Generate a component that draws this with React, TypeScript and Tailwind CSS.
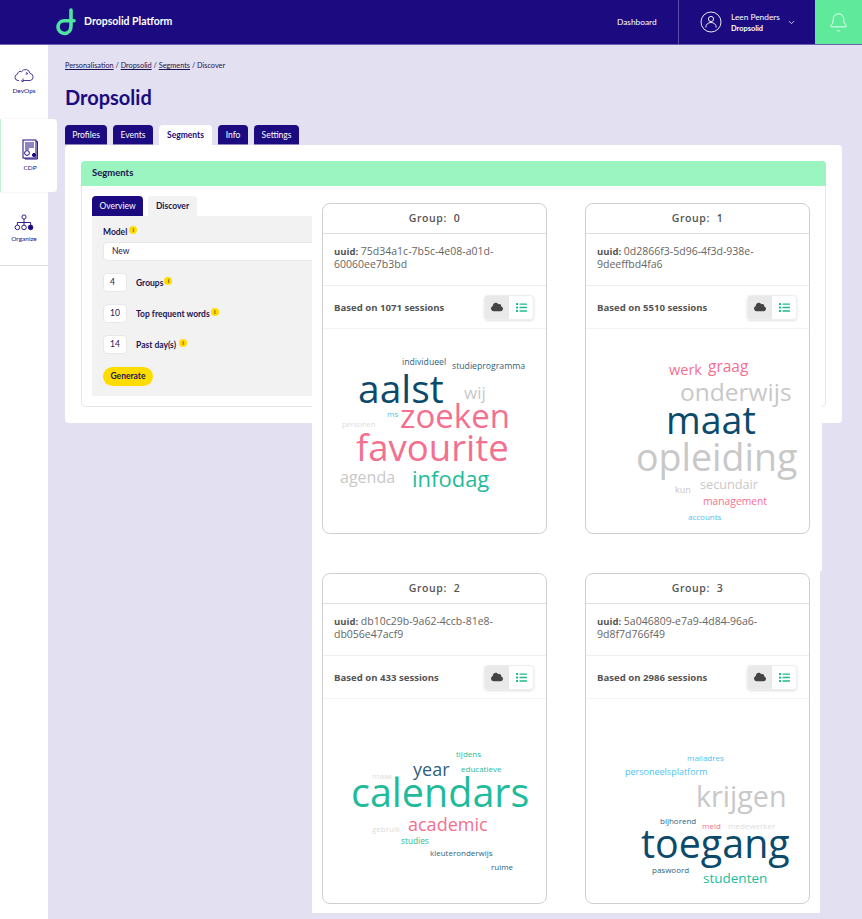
import { Bell, ChevronDown } from 'lucide-react';
import { FaCloud, FaList } from 'react-icons/fa';

const DARK = '#0b4a6b';
const PINK = '#f4708f';
const GRAY = '#c8c8c8';
const LIGHT = '#dcdcdc';
const TEAL = '#1fbb9c';
const BLUE = '#4cc3f1';
const SLATE = '#2f5f80';

type Word = { text: string; x: number; y: number; size: number; color: string };

// x = left edge, y = baseline, both measured from the top left of the cloud area
const groups: { id: number; uuid: string[]; sessions: number; words: Word[] }[] = [
  {
    id: 0,
    uuid: ['75d34a1c-7b5c-4e08-a01d-', '60060ee7b3bd'],
    sessions: 1071,
    words: [
      { text: 'individueel', x: 79, y: 37, size: 8.7, color: SLATE },
      { text: 'studieprogramma', x: 129, y: 41, size: 8.7, color: SLATE },
      { text: 'aalst', x: 35, y: 74, size: 39, color: DARK },
      { text: 'wij', x: 141, y: 70, size: 17, color: GRAY },
      { text: 'ms', x: 64, y: 88, size: 8, color: BLUE },
      { text: 'personen', x: 19, y: 99, size: 7.5, color: LIGHT },
      { text: 'zoeken', x: 77, y: 99, size: 33, color: PINK },
      { text: 'favourite', x: 33, y: 132, size: 36.5, color: PINK },
      { text: 'agenda', x: 17, y: 154, size: 16, color: GRAY },
      { text: 'infodag', x: 89, y: 158, size: 22, color: TEAL },
    ],
  },
  {
    id: 1,
    uuid: ['0d2866f3-5d96-4f3d-938e-', '9deeffbd4fa6'],
    sessions: 5510,
    words: [
      { text: 'werk', x: 83, y: 47, size: 14.5, color: PINK },
      { text: 'graag', x: 122, y: 44, size: 15.5, color: PINK },
      { text: 'onderwijs', x: 94, y: 73, size: 24.5, color: GRAY },
      { text: 'maat', x: 80, y: 105, size: 37.5, color: DARK },
      { text: 'opleiding', x: 50, y: 142, size: 37.5, color: GRAY },
      { text: 'secundair', x: 114, y: 160, size: 12.7, color: GRAY },
      { text: 'kun', x: 89, y: 164, size: 9, color: GRAY },
      { text: 'management', x: 117, y: 176, size: 10.3, color: PINK },
      { text: 'accounts', x: 102, y: 191, size: 8, color: BLUE },
    ],
  },
  {
    id: 2,
    uuid: ['db10c29b-9a62-4ccb-81e8-', 'db056e47acf9'],
    sessions: 433,
    words: [
      { text: 'tijdens', x: 133, y: 58, size: 8, color: TEAL },
      { text: 'educatieve', x: 138, y: 73, size: 8, color: TEAL },
      { text: 'year', x: 90, y: 77, size: 18, color: SLATE },
      { text: 'maak', x: 49, y: 80, size: 8, color: LIGHT },
      { text: 'calendars', x: 28, y: 109, size: 39.5, color: TEAL },
      { text: 'academic', x: 85, y: 132, size: 18, color: PINK },
      { text: 'gebruik', x: 49, y: 133, size: 8, color: LIGHT },
      { text: 'studies', x: 78, y: 145, size: 8.3, color: TEAL },
      { text: 'kleuteronderwijs', x: 107, y: 157, size: 8, color: SLATE },
      { text: 'ruime', x: 168, y: 171, size: 8, color: SLATE },
    ],
  },
  {
    id: 3,
    uuid: ['5a046809-e7a9-4d84-96a6-', '9d8f7d766f49'],
    sessions: 2986,
    words: [
      { text: 'mailadres', x: 101, y: 62, size: 8, color: BLUE },
      { text: 'personeelsplatform', x: 39, y: 76, size: 9, color: BLUE },
      { text: 'krijgen', x: 110, y: 108, size: 28.7, color: GRAY },
      { text: 'bijhorend', x: 74, y: 125, size: 8, color: SLATE },
      { text: 'meld', x: 116, y: 130, size: 8, color: PINK },
      { text: 'medewerker', x: 142, y: 130, size: 8, color: LIGHT },
      { text: 'toegang', x: 55, y: 160, size: 39.4, color: DARK },
      { text: 'paswoord', x: 66, y: 174, size: 8, color: SLATE },
      { text: 'studenten', x: 117, y: 185, size: 13.5, color: TEAL },
    ],
  },
];

function Info() {
  return (
    <span className="inline-flex h-2 w-2 items-center justify-center rounded-full bg-[#ffdc00] text-[6px] leading-none font-bold text-[#5b4b00]">
      i
    </span>
  );
}

function DevOpsIcon() {
  return (
    <svg width="20" height="16" viewBox="0 0 20 16" fill="none" stroke="#1c0b80" strokeWidth="0.8">
      <path d="M5 13.5H4a3.2 3.2 0 0 1-.6-6.3 3.4 3.4 0 0 1 4.2-2.6A4.6 4.6 0 0 1 16 6.4a3.6 3.6 0 0 1 .2 7.1H9" />
      <path d="M9 11.5v3.5l-2-1.6M12.5 5l1 2-2 .2" />
    </svg>
  );
}

function CdpIcon() {
  return (
    <svg width="16" height="21" viewBox="0 0 16 21" fill="none" stroke="#1c0b80" strokeWidth="1">
      <path d="M14 2.5h1.4v17.5H3v-1" />
      <rect x="1" y="1" width="13" height="18" fill="#fff" />
      <path d="M3 4h9M3 6h9M3 8h9M3 10h4" />
      <circle cx="5" cy="14" r="2.4" />
      <circle cx="12" cy="16" r="1.6" fill="#1c0b80" />
    </svg>
  );
}

function OrganizeIcon() {
  return (
    <svg width="20" height="17" viewBox="0 0 20 17" fill="none" stroke="#1c0b80" strokeWidth="0.9">
      <circle cx="10" cy="3" r="2.1" />
      <path d="M10 5v3.5M3.4 11V8.5h13.2V11M10 8.5V11" />
      <circle cx="3.4" cy="13.4" r="2.3" />
      <circle cx="10" cy="13.4" r="2.3" />
      <circle cx="16.6" cy="13.4" r="2.3" fill="#1c0b80" />
    </svg>
  );
}

function Logo() {
  return (
    <svg width="20" height="28" viewBox="0 0 20 28" fill="none" stroke="#4fe3a0" strokeWidth="3.6" strokeLinecap="round">
      <path d="M15 2v16c0 4.5-2.6 7.5-6.6 7.5A6.6 6.6 0 0 1 2 19c0-3.700 2.900-6.300 6.500-6.300H18" />
    </svg>
  );
}

function UserIcon() {
  return (
    <svg width="22" height="22" viewBox="0 0 22 22" fill="none" stroke="#fff" strokeWidth="0.9">
      <circle cx="11" cy="11" r="10" />
      <circle cx="11" cy="8" r="2.600" />
      <path d="M5.800 16.500c0-3 2-5 5.200-5s5.200 2 5.200 5" />
    </svg>
  );
}

function Tab({ label, active, width }: { label: string; active?: boolean; width: string }) {
  return (
    <div
      className={
        active
          ? `flex h-5 ${width} items-center justify-center rounded-t bg-white pt-px text-[8.5px] font-bold text-[#1c0b80]`
          : `flex h-5 ${width} items-center justify-center rounded-t border-b border-[#8d84c4] bg-[#1c0b80] pt-px text-[8.5px] text-white`
      }
    >
      {label}
    </div>
  );
}

function NumberField({ value, label, gap }: { value: string; label: string; gap: string }) {
  return (
    <div className="flex h-[19px] items-center">
      <div className="flex h-[19px] w-6 items-center rounded-sm border border-[#e8e8e8] bg-white pl-1.5 text-[8.5px] text-[#1c1450]">
        {value}
      </div>
      <span className="ml-[9px] pt-0.5 text-[8.5px] font-bold text-[#1c1450]">{label}</span>
      <span className={`${gap} -mt-1 flex`}>
        <Info />
      </span>
    </div>
  );
}

function GroupCard({ group }: { group: (typeof groups)[number] }) {
  return (
    <div className="flex h-[331px] w-[225px] flex-col rounded-lg border border-[#cfcfcf] bg-white font-['Open_Sans',sans-serif] text-[#555]">
      <div className="flex h-[30px] shrink-0 items-center justify-center border-b border-[#dedede] text-[10.5px] font-semibold tracking-[0.6px]">
        Group:&nbsp;&nbsp;{group.id}
      </div>
      <div className="h-[52px] shrink-0 border-b border-[#eeeeee] px-[11px] pt-[11px] text-[10.5px] leading-[13px] text-[#666]">
        <div>
          <b className="text-[9.5px] font-bold text-[#555]">uuid:</b> {group.uuid[0]}
        </div>
        <div>{group.uuid[1]}</div>
      </div>
      <div className="flex h-[43px] shrink-0 items-center justify-between border-b border-[#f3f3f3] pr-3 pl-[11px] text-[9.6px] font-bold">
        <span className="pt-0.5">Based on {group.sessions} sessions</span>
        <div className="flex h-[25px] w-[50px] rounded-sm border border-[#eeeeee] shadow-sm">
          <div className="flex flex-1 items-center justify-center bg-[#e9e9e9] text-[#444]">
            <FaCloud size={12} />
          </div>
          <div className="flex flex-1 items-center justify-center text-[#1fbb8c]">
            <FaList size={11} />
          </div>
        </div>
      </div>
      <div className="relative flex-1">
        {group.words.map((w) => (
          <span
            key={w.text}
            className="absolute whitespace-nowrap leading-none"
            style={{ left: w.x, top: w.y - w.size * 0.888, fontSize: w.size, color: w.color }}
          >
            {w.text}
          </span>
        ))}
      </div>
    </div>
  );
}

export default function App() {
  return (
    <div className="flex h-[919px] w-[862px] flex-col overflow-hidden bg-[#e2e0f1] font-['Lato',sans-serif]">
      {/* Top bar */}
      <header className="flex h-[45px] shrink-0 items-stretch border-b border-[#6d62b5] bg-[#1c0b80] text-white">
        <div className="flex flex-1 items-center pl-[56px]">
          <Logo />
          <span className="ml-2 text-[10.5px] font-bold">Dropsolid Platform</span>
        </div>
        <div className="flex w-[61px] items-center text-[8.3px]">Dashboard</div>
        <div className="flex w-[137px] items-center border-l border-[#5a4fa8] pl-[21px]">
          <UserIcon />
          <div className="ml-[9px] w-[56px]">
            <div className="text-[8.3px] leading-[12px]">Leen Penders</div>
            <div className="text-[7.4px] leading-[11px] font-bold">Dropsolid</div>
          </div>
          <ChevronDown size={9} strokeWidth={2} />
        </div>
        <div className="flex w-[47px] items-center justify-center bg-[#5eea9a]">
          <Bell size={21} strokeWidth={1} />
        </div>
      </header>

      <div className="flex flex-1">
        {/* Side nav */}
        <aside className="relative w-[48px] shrink-0 bg-white text-[#1c0b80]">
          <div className="flex h-[74px] flex-col items-center justify-end gap-1 pb-6">
            <DevOpsIcon />
            <span className="text-[6.5px] leading-[8px]">DevOps</span>
          </div>
          <div className="flex h-[73px] w-[57px] flex-col items-center justify-center gap-1 rounded-r border-l border-[#bff3d6] bg-white pl-0.5 shadow-[0_0_2px_#e2e0f1]">
            <CdpIcon />
            <span className="text-[6.5px] leading-[8px]">CDP</span>
          </div>
          <div className="flex h-[74px] flex-col items-center justify-center gap-1 border-b border-[#dddddd]">
            <OrganizeIcon />
            <span className="text-[6.5px] leading-[8px]">Organize</span>
          </div>
        </aside>

        {/* Main */}
        <main className="flex-1 pl-[17px]">
          <div className="mt-4 text-[7.3px] leading-[9px] text-[#1c1450]">
            <span className="underline">Personalisation</span> /{' '}
            <span className="underline">Dropsolid</span> /{' '}
            <span className="underline">Segments</span> / Discover
          </div>
          <h1 className="mt-[14px] text-[20px] leading-[26px] font-bold text-[#1c0b80]">Dropsolid</h1>
          <div className="mt-[15px] flex gap-[6px]">
            <Tab label="Profiles" width="w-[42px]" />
            <Tab label="Events" width="w-[40px]" />
            <Tab label="Segments" width="w-[53px]" active />
            <Tab label="Info" width="w-[30px]" />
            <Tab label="Settings" width="w-[45px]" />
          </div>

          <div className="relative h-[278px] w-[777px] rounded-sm bg-white p-4">
            <div className="h-[246px] rounded-sm border border-[#e8e8e8] bg-white">
              <div className="-mx-px -mt-px flex h-[25px] items-center rounded-t-sm bg-[#9af5c0] pl-[11px] text-[9.5px] font-bold text-[#1c1450]">
                Segments
              </div>
              <div className="px-[10px] pt-[10px]">
                <div className="flex gap-[5px]">
                  <div className="flex h-5 w-[51px] items-center justify-center rounded-t bg-[#1c0b80] text-[8.5px] text-white">
                    Overview
                  </div>
                  <div className="flex h-5 w-[49px] items-center justify-center rounded-t bg-[#f2f2f2] text-[8.5px] font-bold text-[#1c1450]">
                    Discover
                  </div>
                </div>
                <div className="h-[180px] bg-[#f2f2f2] px-[11px] pt-[10px]">
                  <div className="flex items-center gap-[2px] text-[8.5px] leading-[12px] font-bold text-[#1c1450]">
                    Model
                    <span className="-mt-1 flex">
                      <Info />
                    </span>
                  </div>
                  <div className="mt-[4px] flex h-[19px] items-center rounded-sm border border-[#e8e8e8] bg-white pl-2 text-[8.5px] text-[#1c1450]">
                    New
                  </div>
                  <div className="mt-3 flex flex-col gap-3">
                    <NumberField value="4" label="Groups" gap="ml-px" />
                    <NumberField value="10" label="Top frequent words" gap="ml-px" />
                    <NumberField value="14" label="Past day(s)" gap="ml-[3px]" />
                  </div>
                  <div className="mt-[13px] flex h-[19px] w-[50px] items-center justify-center rounded-full bg-[#ffdc00] text-[8.5px] font-bold text-[#1c1450]">
                    Generate
                  </div>
                </div>
              </div>
            </div>

            {/* Results sit on top of the panel and run past its bottom edge */}
            <div className="absolute top-[50px] left-[247px]">
              <div className="flex h-[376px] w-[510px] gap-[38px] bg-white pt-2 pl-[10px]">
                <GroupCard group={groups[0]} />
                <GroupCard group={groups[1]} />
              </div>
              <div className="flex h-[342px] w-[508px] gap-[38px] bg-white pt-0.5 pl-[10px]">
                <GroupCard group={groups[2]} />
                <GroupCard group={groups[3]} />
              </div>
            </div>
          </div>
        </main>
      </div>
    </div>
  );
}
